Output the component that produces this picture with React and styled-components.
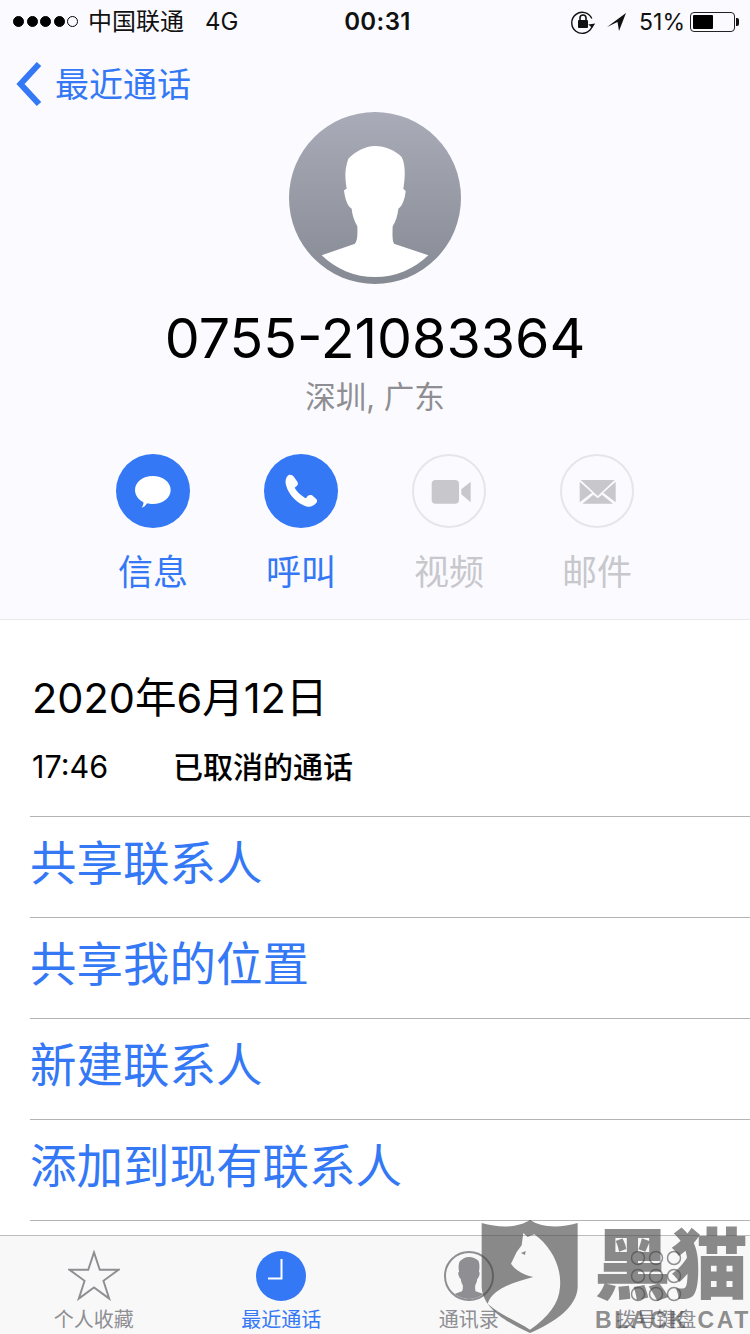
import styled, { createGlobalStyle } from "styled-components";

const GlobalStyle = createGlobalStyle`
html, body {
  margin: 0;
  padding: 0;
  background: #ffffff;
}
* {
  box-sizing: border-box;
}
`;

const latin = `Inter, "Noto Sans CJK SC", sans-serif`;
const blue = "#3478f6";
const disabled = "#c7c7cc";

const silhouette =
  "M155 465 L255 430 C262 420 263 405 262 378 C252 360 247 345 245 325 C235 320 225 300 222 270 L230 265 C226 240 222 210 235 175 C255 155 285 137 315 137 C345 137 375 150 395 170 C408 195 405 235 400 265 L407 272 C405 295 397 318 385 325 C383 345 378 362 368 378 C367 405 367 420 372 430 L475 465 A229 229 0 0 1 155 465 Z";

// Page
const Page = styled.div`
  position: relative;
  width: 750px;
  height: 1334px;
  overflow: hidden;
  display: flex;
  flex-direction: column;
  font-family: ${latin};
  background: #ffffff;
`;

// Header
const Header = styled.header`
  height: 620px;
  flex: none;
  background: #fbfbff;
  border-bottom: 1px solid #e9e9ec;
`;

// Status bar
const StatusBar = styled.div`
  height: 41px;
  padding: 2px 12px 0 13px;
  display: grid;
  grid-template-columns: 1fr auto 1fr;
  align-items: center;
  font-size: 24px;
  color: #111111;
`;

const StatusLeft = styled.div`
  display: flex;
  align-items: center;
`;

const StatusRight = styled.div`
  display: flex;
  align-items: center;
  justify-content: flex-end;
`;

const Dots = styled.div`
  display: flex;
  gap: 2.5px;
  margin-right: 10px;
`;

const Dot = styled.span`
  width: 11px;
  height: 11px;
  border-radius: 50%;
  border: 1px solid #000000;
  background: ${(p) => (p.$empty ? "transparent" : "#000000")};
`;

const Carrier = styled.span`
  font-weight: 400;
  margin: 0 21px 4px 0;
`;

const Clock = styled.span`
  font-weight: 600;
  letter-spacing: 0.4px;
  margin-left: 4px;
`;

const Arrow = styled.span`
  display: flex;
  margin-left: 11px;
`;

const Percent = styled.span`
  font-size: 23px;
  font-weight: 400;
  margin: 0 5px 0 12px;
`;

const Battery = styled.div`
  width: 45px;
  height: 20px;
  border: 1px solid #222222;
  border-radius: 4px;
  padding: 2px;
  margin-right: 3px;
  position: relative;

  &::before {
    content: "";
    display: block;
    height: 100%;
    width: 51%;
    background: #000000;
    border-radius: 1px;
  }

  &::after {
    content: "";
    position: absolute;
    right: -5px;
    top: 5px;
    width: 3px;
    height: 8px;
    background: #111111;
    border-radius: 0 2px 2px 0;
  }
`;

// Nav
const Nav = styled.div`
  height: 71px;
  padding: 12px 0 0 16px;
  display: flex;
  align-items: center;
  gap: 13px;
  font-size: 34px;
  font-weight: 400;
  color: ${blue};

  & > svg {
    margin-top: 2px;
  }
`;

const Avatar = styled.div`
  width: 172px;
  height: 172px;
  margin: 0 auto;
  border-radius: 50%;
  background: linear-gradient(#a9acb8, #868a93);
  overflow: hidden;
`;

const PhoneNumber = styled.div`
  margin-top: 24px;
  height: 60px;
  line-height: 60px;
  text-align: center;
  font-size: 55.5px;
  font-weight: 400;
  color: #000000;
`;

const Place = styled.div`
  margin-top: 7px;
  height: 44px;
  line-height: 44px;
  text-align: center;
  font-size: 30.5px;
  font-weight: 400;
  color: #8e8e93;
`;

// Actions
const Actions = styled.div`
  margin-top: 35px;
  padding-left: 116px;
  display: flex;
  gap: 74px;
`;

const Action = styled.div`
  width: 74px;
  display: flex;
  flex-direction: column;
  align-items: center;
  color: ${(p) => (p.$off ? disabled : blue)};
`;

const ActionCircle = styled.div`
  width: 74px;
  height: 74px;
  border-radius: 50%;
  background: ${(p) => (p.$off ? "transparent" : blue)};
  border: ${(p) => (p.$off ? "2px solid #e6e6ea" : "none")};
  display: flex;
  align-items: center;
  justify-content: center;
`;

const ActionLabel = styled.div`
  margin-top: 22px;
  white-space: nowrap;
  font-size: 35px;
  line-height: 44px;
  font-weight: 400;
`;

// Detail
const Detail = styled.section`
  flex: 1;
  padding-top: 53px;
`;

const DateLine = styled.div`
  padding-left: 32px;
  font-size: 41.5px;
  line-height: 50px;
  font-weight: 400;
  color: #000000;
`;

const CallLine = styled.div`
  margin-top: 24px;
  padding-left: 32px;
  display: flex;
  font-size: 30.5px;
  line-height: 40px;
  color: #000000;
`;

const CallTime = styled.span`
  width: 141px;
  font-weight: 400;
`;

const CallText = styled.span`
  font-size: 30px;
  font-weight: 500;
`;

const LinkList = styled.div`
  margin: 29px 0 0 30px;
  border-top: 1px solid #b4b4b4;
`;

const LinkRow = styled.div`
  height: 101px;
  padding: 0 0 15px 0;
  display: flex;
  align-items: center;
  border-bottom: 1px solid #b4b4b4;
  font-size: 46.5px;
  font-weight: 400;
  color: ${blue};
`;

// Tab bar
const TabBar = styled.nav`
  height: 99px;
  flex: none;
  display: grid;
  grid-template-columns: repeat(4, 1fr);
  background: #f8f8f8;
  border-top: 1px solid #bdbdbd;
`;

const Tab = styled.div`
  padding-top: 13px;
  display: flex;
  flex-direction: column;
  align-items: center;
  font-size: 20px;
  font-weight: 400;
  color: ${(p) => (p.$active ? blue : "#8e8e93")};
`;

const TabIcon = styled.div`
  width: 54px;
  height: 54px;
  flex: none;
  display: flex;
  align-items: center;
  justify-content: center;
`;

const TabLabel = styled.span`
  margin-top: 3px;
  line-height: 28px;
`;

// Watermark
const Watermark = styled.div`
  position: absolute;
  left: 481px;
  top: 1219px;
  width: 269px;
  height: 115px;
  color: rgba(70, 70, 70, 0.62);
  pointer-events: none;
`;

const ShieldSvg = styled.svg`
  position: absolute;
  left: 0;
  top: 0;
`;

const BrandCn = styled.div`
  position: absolute;
  left: 113px;
  top: -2px;
  font-size: 77px;
  line-height: 96px;
  font-weight: 900;
  white-space: nowrap;
`;

const BrandEn = styled.div`
  position: absolute;
  left: 114px;
  top: 86px;
  font-family: "Liberation Sans", sans-serif;
  font-size: 23px;
  line-height: 30px;
  font-weight: 700;
  letter-spacing: 2.6px;
  white-space: nowrap;
`;

const RotationLock = () => (
  <svg width="26" height="26" viewBox="0 0 26 26">
    <path d="M21.8 9.5A10.5 10.5 0 1 0 21.9 18" fill="none" stroke="#111" strokeWidth="1.4" />
    <path d="M18.5 15h7l-3.5 4z" fill="#111" transform="rotate(-8 22 17)" />
    <rect x="8" y="11" width="10" height="8" rx="1" fill="#111" />
    <path d="M10 11V9a3 3 0 0 1 6 0v2" fill="none" stroke="#111" strokeWidth="1.6" />
  </svg>
);

const LocationArrow = () => (
  <svg width="20" height="20" viewBox="0 0 20 20">
    <path d="M0 15 L19 1 L12 19 L10.5 10 Z" fill="#111" />
  </svg>
);

const Chevron = () => (
  <svg width="26" height="44" viewBox="0 0 26 44">
    <path d="M23 2 L4.5 22 L23 42" fill="none" stroke={blue} strokeWidth="6" />
  </svg>
);

const AvatarArt = () => (
  <svg width="172" height="172" viewBox="57 35 516 516">
    <path d={silhouette} fill="#ffffff" />
  </svg>
);

// icons below are traced in 3x crop coordinates
const MessageIcon = () => (
  <svg width="74" height="74" viewBox="48 42 222 222">
    <path
      d="M158 108 C188 108 212 126 212 150 C212 174 188 192 158 192 C152 192 146 192 141 190 C137 197 132 202 125 203 C129 197 131 192 130 186 C116 180 105 166 105 150 C105 126 129 108 158 108 Z"
      fill="#ffffff"
    />
  </svg>
);

const PhoneIcon = () => (
  <svg width="74" height="74" viewBox="492 42 222 222">
    <path
      d="M566 105 C572 103 578 106 582 111 L592 125 C595 130 594 135 590 138 L584 143 C590 155 605 168 618 175 L623 168 C627 164 632 164 636 166 L648 176 C653 180 652 186 648 190 C640 198 632 202 622 200 C595 194 565 165 558 135 C555 122 558 110 566 105 Z"
      fill="#ffffff"
    />
  </svg>
);

const VideoIcon = () => (
  <svg width="70" height="70" viewBox="70 45 210 210">
    <rect x="123" y="117" width="82" height="71" rx="12" fill={disabled} />
    <path d="M212 145 L240 122 V184 L212 160 Z" fill={disabled} />
  </svg>
);

const MailIcon = () => (
  <svg width="70" height="70" viewBox="514 45 210 210">
    <path d="M570 117 H672 L621 165 Z" fill={disabled} />
    <path d="M567 122 L604 155 L567 184 Z" fill={disabled} />
    <path d="M675 122 L638 155 L675 184 Z" fill={disabled} />
    <path d="M575 188 L608 161 L621 172 L634 161 L667 188 Z" fill={disabled} />
  </svg>
);

const StarIcon = () => (
  <svg width="52" height="52" viewBox="0 0 54 54">
    <path
      d="M27 2.5 L33 20.5 L52.5 20.5 L36.8 32 L42.8 50.5 L27 39 L11.2 50.5 L17.2 32 L1.5 20.5 L21 20.5 Z"
      fill="none"
      stroke="#8e8e93"
      strokeWidth="2"
    />
  </svg>
);

const ClockIcon = () => (
  <svg width="50" height="50" viewBox="0 0 50 50">
    <circle cx="25" cy="25" r="25" fill={blue} />
    <path d="M25.5 8 V27.5 H12" fill="none" stroke="#ffffff" strokeWidth="2" />
  </svg>
);

const ContactIcon = () => (
  <svg width="50" height="50" viewBox="0 0 50 50">
    <defs>
      <clipPath id="contactClip">
        <circle cx="25" cy="25" r="23" />
      </clipPath>
    </defs>
    <circle cx="25" cy="25" r="24" fill="none" stroke="#8e8e93" strokeWidth="2" />
    <g clipPath="url(#contactClip)">
      <g transform="translate(25 6) scale(0.117) translate(-315 -137)">
        <path d={silhouette} fill="#8e8e93" />
      </g>
    </g>
  </svg>
);

const KeypadIcon = () => (
  <svg width="54" height="54" viewBox="0 0 54 54">
    {[0, 1, 2].map((row) =>
      [0, 1, 2].map((col) => (
        <circle
          key={`${row}-${col}`}
          cx={9 + col * 18}
          cy={9 + row * 18}
          r="6.5"
          fill="none"
          stroke="#8e8e93"
          strokeWidth="1.5"
        />
      ))
    )}
  </svg>
);

const ShieldArt = () => (
  <ShieldSvg width="112" height="120" viewBox="318 26 336 360">
    <path
      fillRule="evenodd"
      d="M320 38 C380 55 435 50 465 28 C495 50 550 55 608 38 L608 230 C606 290 540 335 465 368 C390 335 322 290 320 230 Z M445 68 L458 80 L478 72 C530 110 560 170 555 230 C552 280 520 320 465 358 C420 330 370 310 338 280 C350 240 400 220 475 200 C450 195 420 180 408 160 L425 125 L440 105 Z M438 128 L452 122 L450 134 Z"
      fill="currentColor"
    />
  </ShieldSvg>
);

const links = ["共享联系人", "共享我的位置", "新建联系人", "添加到现有联系人"];

const actions = [
  { label: "信息", icon: <MessageIcon /> },
  { label: "呼叫", icon: <PhoneIcon /> },
  { label: "视频", icon: <VideoIcon />, off: true },
  { label: "邮件", icon: <MailIcon />, off: true },
];

const tabs = [
  { label: "个人收藏", icon: <StarIcon /> },
  { label: "最近通话", icon: <ClockIcon />, active: true },
  { label: "通讯录", icon: <ContactIcon /> },
  { label: "拨号键盘", icon: <KeypadIcon /> },
];

const App = () => {
  return (
    <Page>
      <GlobalStyle />
      <Header>
        <StatusBar>
          <StatusLeft>
            <Dots>
              <Dot />
              <Dot />
              <Dot />
              <Dot />
              <Dot $empty />
            </Dots>
            <Carrier>中国联通</Carrier>
            <span>4G</span>
          </StatusLeft>
          <Clock>00:31</Clock>
          <StatusRight>
            <RotationLock />
            <Arrow>
              <LocationArrow />
            </Arrow>
            <Percent>51%</Percent>
            <Battery />
          </StatusRight>
        </StatusBar>
        <Nav>
          <Chevron />
          <span>最近通话</span>
        </Nav>
        <Avatar>
          <AvatarArt />
        </Avatar>
        <PhoneNumber>0755-21083364</PhoneNumber>
        <Place>深圳, 广东</Place>
        <Actions>
          {actions.map((a) => (
            <Action key={a.label} $off={a.off}>
              <ActionCircle $off={a.off}>{a.icon}</ActionCircle>
              <ActionLabel>{a.label}</ActionLabel>
            </Action>
          ))}
        </Actions>
      </Header>
      <Detail>
        <DateLine>2020年6月12日</DateLine>
        <CallLine>
          <CallTime>17:46</CallTime>
          <CallText>已取消的通话</CallText>
        </CallLine>
        <LinkList>
          {links.map((l) => (
            <LinkRow key={l}>{l}</LinkRow>
          ))}
        </LinkList>
      </Detail>
      <TabBar>
        {tabs.map((t) => (
          <Tab key={t.label} $active={t.active}>
            <TabIcon>{t.icon}</TabIcon>
            <TabLabel>{t.label}</TabLabel>
          </Tab>
        ))}
      </TabBar>
      <Watermark>
        <ShieldArt />
        <BrandCn>黑猫</BrandCn>
        <BrandEn>BLACK CAT</BrandEn>
      </Watermark>
    </Page>
  );
};

export default App;
